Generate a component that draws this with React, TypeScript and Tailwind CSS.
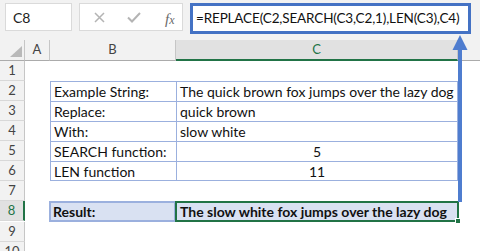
import React from "react";

function RowHead({ n, sel }: { n: number; sel?: boolean }) {
  return (
    <div
      className={
        "h-[20px] w-[25px] shrink-0 flex items-center justify-center border-b border-[#d8d8d8] text-[13px] " +
        (sel
          ? "bg-[#e1e1e1] text-[#217346] border-r-2 border-r-[#217346]"
          : "bg-[#f2f2f2] text-[#444] border-r border-r-[#c6c6c6]")
      }
    >
      {n}
    </div>
  );
}

export default function App() {
  const tbl = "border-[#9bb0de]";
  return (
    <div
      className="relative w-[480px] h-[251px] overflow-hidden bg-white text-[#111]"
      style={{ fontFamily: "Lato, 'Open Sans', sans-serif" }}
    >
      {/* formula bar */}
      <div className="h-[40px] bg-[#f2f2f2] flex items-start pt-[3px]">
        <div className="ml-[5px] w-[67px] h-[28px] bg-white border border-[#dadada] flex items-center pl-[7px] text-[14px] text-[#222]">
          C8
        </div>
        <div className="ml-[7px] w-[104px] h-[28px] bg-white border border-[#dadada] flex items-center relative">
          <svg className="absolute left-[14px] top-[8px]" width="11" height="11" viewBox="0 0 11 11">
            <path d="M1 1 L10 10 M10 1 L1 10" stroke="#b4b4b4" strokeWidth="1.5" />
          </svg>
          <svg className="absolute left-[47px] top-[8px]" width="14" height="11" viewBox="0 0 14 11">
            <path d="M1 5.5 L5 9.5 L13 1" stroke="#b4b4b4" strokeWidth="2" fill="none" />
          </svg>
          <span
            className="absolute left-[85px] top-[4px] text-[15px] italic text-[#6a6a6a]"
            style={{ fontFamily: "'Liberation Serif', serif" }}
          >
            f<span className="text-[12px]">x</span>
          </span>
        </div>
        <div className="ml-[7px] w-[281px] h-[31px] bg-white border-[3px] border-[#4472c4] flex items-center pl-[3px] text-[13.5px] tracking-[-0.15px] text-[#111] whitespace-nowrap">
          =REPLACE(C2,SEARCH(C3,C2,1),LEN(C3),C4)
        </div>
      </div>

      {/* column headers */}
      <div className="flex h-[21px] bg-[#f2f2f2] text-[13px] text-[#444]">
        <div className="w-[25px] shrink-0 relative border-r border-[#c6c6c6] border-b border-b-[#ababab]">
          <svg className="absolute left-[10px] top-[6px]" width="12" height="11" viewBox="0 0 12 11">
            <path d="M0 11 L12 11 L12 0 Z" fill="#b9b9b9" />
          </svg>
        </div>
        <div className="w-[25px] shrink-0 flex items-center justify-center border-r border-[#c6c6c6] border-b border-b-[#ababab]">
          A
        </div>
        <div className="w-[126px] shrink-0 flex items-center justify-center border-r border-[#c6c6c6] border-b border-b-[#ababab]">
          B
        </div>
        <div className="w-[282px] shrink-0 flex items-center justify-center bg-[#e1e1e1] text-[#217346] border-r border-[#c6c6c6] border-b-2 border-b-[#217346]">
          C
        </div>
        <div className="flex-1 border-b border-b-[#ababab]" />
      </div>

      {/* rows */}
      <div className="text-[14px]">
        <div className="flex">
          <RowHead n={1} />
        </div>
        {[
          ["Example String:", "The quick brown fox jumps over the lazy dog", false],
          ["Replace:", "quick brown", false],
          ["With:", "slow white", false],
          ["SEARCH function:", "5", true],
          ["LEN function", "11", true],
        ].map(([b, c, center], i) => (
          <div className="flex" key={i}>
            <RowHead n={i + 2} />
            <div className="w-[25px] shrink-0" />
            <div
              className={
                "w-[126px] shrink-0 h-[20px] border-l border-t " +
                tbl +
                (i === 4 ? " border-b" : "") +
                " flex items-center pl-[3px] whitespace-nowrap"
              }
            >
              {b as string}
            </div>
            <div
              className={
                "w-[282px] shrink-0 h-[20px] border-l border-r border-t " +
                tbl +
                (i === 4 ? " border-b" : "") +
                " flex items-center whitespace-nowrap " +
                (center ? "justify-center" : "pl-[3px]")
              }
            >
              {c as string}
            </div>
          </div>
        ))}
        <div className="flex">
          <RowHead n={7} />
        </div>
        <div className="flex">
          <RowHead n={8} sel />
          <div className="w-[24px] shrink-0" />
          <div className="w-[127px] shrink-0 h-[21px] bg-[#d9e1f2] border-2 border-[#9bb0de] flex items-center pl-[2px] font-bold whitespace-nowrap">
            Result:
          </div>
          <div className="relative w-[284px] shrink-0 h-[21px] -ml-[1px] bg-[#d9e1f2] border-2 border-[#217346] flex items-center pl-[3px] font-bold whitespace-nowrap">
            The slow white fox jumps over the lazy dog
            <div className="absolute -right-[4px] -bottom-[4px] w-[6px] h-[6px] bg-[#217346] border border-white" />
          </div>
        </div>
        <div className="flex">
          <RowHead n={9} />
        </div>
        <div className="flex">
          <RowHead n={10} />
        </div>
      </div>

      {/* annotation arrow */}
      <svg className="absolute left-0 top-0 pointer-events-none" width="480" height="251">
        <rect x="458" y="49" width="4" height="153" fill="#4f7dcf" />
        <path d="M460 35 L467.5 50 L452.5 50 Z" fill="#4f7dcf" />
      </svg>
    </div>
  );
}
